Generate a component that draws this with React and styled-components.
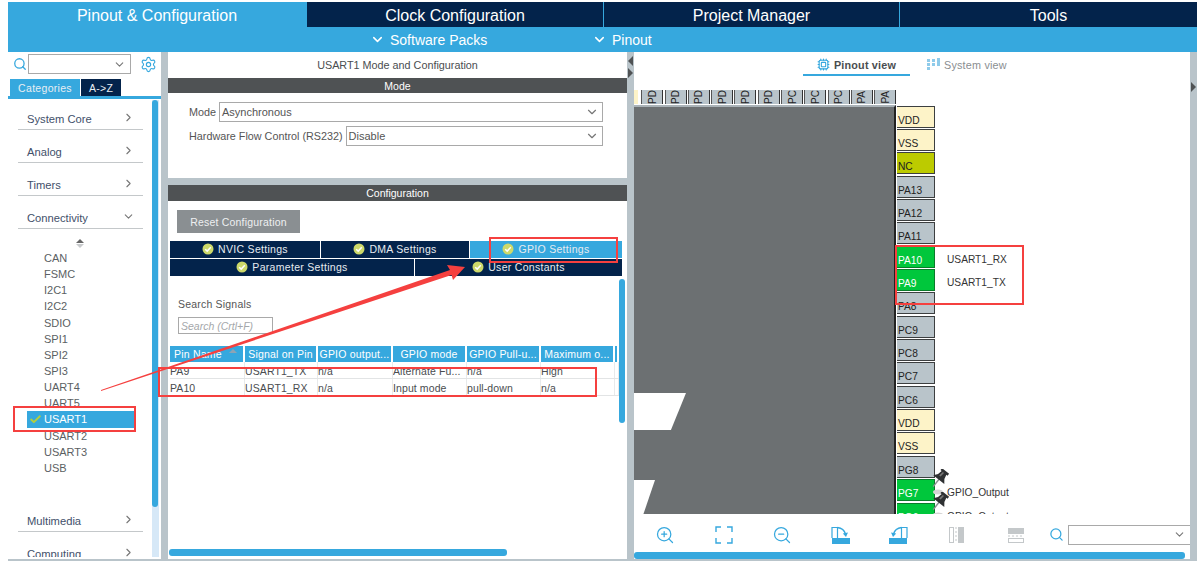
import React from "react";
import styled, { createGlobalStyle } from "styled-components";
import { ChevronDown, ChevronRight, Check, Search, Settings, ZoomIn, ZoomOut, Cpu } from "lucide-react";

const BLUE = "#36a8de";
const NAVY = "#03234b";
const STRIP = "#b9c4ca";
const DARK = "#4f5254";

const GlobalStyle = createGlobalStyle`
  html, body { margin: 0; padding: 0; background: #fff; }
  body { font-family: "Liberation Sans", Arial, sans-serif; overflow: hidden; }
  * { box-sizing: border-box; }
`;

const categoriesTop = ["System Core", "Analog", "Timers"];
const peripherals = ["CAN", "FSMC", "I2C1", "I2C2", "SDIO", "SPI1", "SPI2", "SPI3", "UART4", "UART5", "USART1", "USART2", "USART3", "USB"];
const topPins = ["PD", "PD", "PD", "PD", "PD", "PD", "PC", "PC", "PC", "PA", "PA"];
const sidePins = [
  { name: "VDD", kind: "power" },
  { name: "VSS", kind: "power" },
  { name: "NC", kind: "nc" },
  { name: "PA13" },
  { name: "PA12" },
  { name: "PA11" },
  { name: "PA10", kind: "on", label: "USART1_RX" },
  { name: "PA9", kind: "on", label: "USART1_TX" },
  { name: "PA8" },
  { name: "PC9" },
  { name: "PC8" },
  { name: "PC7" },
  { name: "PC6" },
  { name: "VDD", kind: "power" },
  { name: "VSS", kind: "power" },
  { name: "PG8" },
  { name: "PG7", kind: "on", label: "GPIO_Output", pinned: true },
  { name: "PG6", kind: "on", label: "GPIO_Output", pinned: true },
];
const columns = ["Pin Name", "Signal on Pin", "GPIO output...", "GPIO mode", "GPIO Pull-u...", "Maximum o..."];
const rows = [
  ["PA9", "USART1_TX", "n/a", "Alternate Fu...", "n/a", "High"],
  ["PA10", "USART1_RX", "n/a", "Input mode", "pull-down", "n/a"],
];

function Badge() {
  return (
    <svg width="12" height="12" viewBox="0 0 12 12">
      <circle cx="6" cy="6" r="5.5" fill="#cdd96a" />
      <path d="M3.2 6.2 5.2 8.1 8.8 4.2" fill="none" stroke="#fff" strokeWidth="1.5" />
    </svg>
  );
}

function Pushpin() {
  return (
    <svg width="22" height="27" viewBox="0 0 22 27">
      <ellipse cx="9" cy="23" rx="5" ry="2.500" fill="#d4d4d4" />
      <g transform="rotate(38 11 9)">
        <path d="M11 10v10" stroke="#8a8e91" strokeWidth="1.4" />
        <path d="M6.500 0h9v2.500h-1.500l1 4.500 3 4H4l3-4 1-4.500H6.500z" fill="#2f3133" />
        <path d="M9.500 2.500h1.500l-.4 5H8.700z" fill="#777" />
      </g>
    </svg>
  );
}

function FitIcon() {
  return (
    <svg width="18" height="18" viewBox="0 0 18 18" fill="none" stroke={BLUE} strokeWidth="1.4">
      <path d="M1 6V1h5M12 1h5v5M17 12v5h-5M6 17H1v-5" />
    </svg>
  );
}

function RotateIcon({ $flip }) {
  return (
    <svg width="19" height="18" viewBox="0 0 19 18" style={$flip ? { transform: "scaleX(-1)" } : undefined}>
      <path d="M1 12V1.500h5.500V12" fill="none" stroke={BLUE} strokeWidth="1.200" />
      <path d="M1 12h18v6H1z" fill={BLUE} />
      <path d="M6.500 1.500c4 .5 7 3 8 6.500" fill="none" stroke={BLUE} strokeWidth="1.400" />
      <path d="M11.800 7.500l3.200 3.500 2-4.500z" fill={BLUE} />
    </svg>
  );
}

function SplitIcon({ $horizontal }) {
  return (
    <svg width="16" height="18" viewBox="0 0 16 18" style={$horizontal ? { transform: "rotate(-90deg)" } : undefined}>
      <rect x="0.500" y="1.500" width="4" height="15" fill="none" stroke="#c4c8ca" />
      <path d="M7 1v16" stroke="#c4c8ca" strokeDasharray="2 2" />
      <rect x="9" y="1" width="6" height="16" fill="#c4c8ca" />
    </svg>
  );
}

function BlocksIcon() {
  return (
    <svg width="13" height="13" viewBox="0 0 13 13" fill="#8fcbea">
      <path d="M0 1h3v3H0zM5 1h3v3H5zM10 0h3v8h-3zM0 5h3v3H0zM5 5h3v3H5zM0 9h3v3H0z" />
    </svg>
  );
}

export default function App() {
  return (
    <Page>
      <GlobalStyle />
      <Frame>
        <TopTabs>
          <TopTab $active>Pinout &amp; Configuration</TopTab>
          <TopTab>Clock Configuration</TopTab>
          <TopTab>Project Manager</TopTab>
          <TopTab>Tools</TopTab>
        </TopTabs>
        <SubBar>
          <SubItem $width="222px"><ChevronDown size={15} strokeWidth={2.4} />Software Packs</SubItem>
          <SubItem><ChevronDown size={15} strokeWidth={2.4} />Pinout</SubItem>
        </SubBar>

        <Body>
          <Sidebar>
            <SearchRow>
              <Search size={14} color={BLUE} strokeWidth={2.2} />
              <SideSelect><ChevronDown size={13} color="#777" /></SideSelect>
              <Settings size={17} color={BLUE} strokeWidth={1.6} />
            </SearchRow>
            <SideTabs>
              <SideTab $active>Categories</SideTab>
              <SideTab>A-&gt;Z</SideTab>
            </SideTabs>
            <SideMain>
              <SideList>
                {categoriesTop.map((c) => (
                  <Category key={c}>{c}<ChevronRight size={13} color="#777" /></Category>
                ))}
                <Category>Connectivity<ChevronDown size={13} color="#777" /></Category>
                <ScrollUp><TriUp /><TriDown /></ScrollUp>
                <Items>
                  {peripherals.map((p) => (
                    <Item key={p} $selected={p === "USART1"}>
                      {p === "USART1" && <CheckMark><Check size={13} strokeWidth={3.4} color="#b5cf3a" /></CheckMark>}
                      {p}
                    </Item>
                  ))}
                </Items>
                <Category>Multimedia<ChevronRight size={13} color="#777" /></Category>
                <Category>Computing<ChevronRight size={13} color="#777" /></Category>
              </SideList>
              <SideTrack><SideThumb /></SideTrack>
            </SideMain>
          </Sidebar>

          <Strip />

          <Middle>
            <PanelTitle>USART1 Mode and Configuration</PanelTitle>
            <DarkBar $height="15px">Mode</DarkBar>
            <ModeBody>
              <ModeRow>
                <ModeLabel>Mode</ModeLabel>
                <ModeSelect>Asynchronous<ChevronDown size={14} color="#777" /></ModeSelect>
              </ModeRow>
              <ModeRow>
                <ModeLabel>Hardware Flow Control (RS232)</ModeLabel>
                <ModeSelect>Disable<ChevronDown size={14} color="#777" /></ModeSelect>
              </ModeRow>
            </ModeBody>
            <HSep />
            <DarkBar $height="16px">Configuration</DarkBar>
            <ConfigBody>
              <ResetButton>Reset Configuration</ResetButton>
              <TabGrid>
                <TabRow $columns="151px 149px 152px">
                  <ConfigTab><Badge />NVIC Settings</ConfigTab>
                  <ConfigTab><Badge />DMA Settings</ConfigTab>
                  <ConfigTab $active><Badge />GPIO Settings</ConfigTab>
                </TabRow>
                <TabRow $columns="245px 207px">
                  <ConfigTab><Badge />Parameter Settings</ConfigTab>
                  <ConfigTab><Badge />User Constants</ConfigTab>
                </TabRow>
              </TabGrid>
              <TableArea>
                <TableContent>
                  <SearchLabel>Search Signals</SearchLabel>
                  <SearchBox>Search (Crtl+F)</SearchBox>
                  <TableHead>
                    {columns.map((c, i) => (
                      <HeadCell key={c} $first={i === 0}>
                        {c}
                        {i === 0 && <SortMark />}
                      </HeadCell>
                    ))}
                    <HeadCell />
                  </TableHead>
                  {rows.map((r) => (
                    <TableRow key={r[0]}>
                      {r.map((v, i) => <Cell key={i}>{v}</Cell>)}
                      <Cell />
                    </TableRow>
                  ))}
                </TableContent>
                <TableScroll />
              </TableArea>
              <BottomScroll />
            </ConfigBody>
          </Middle>

          <Strip>
            <ArrowLeft />
            <ArrowRight />
          </Strip>

          <Right>
            <ViewTabs>
              <ViewTab $active><Cpu size={13} color={BLUE} />Pinout view</ViewTab>
              <ViewTab><BlocksIcon />System view</ViewTab>
            </ViewTabs>
            <Canvas>
              <TopPinRow>
                <TopStub />
                {topPins.map((p, i) => (
                  <TopPin key={i}><span>{p}</span></TopPin>
                ))}
              </TopPinRow>
              <ChipRow>
                <ChipBody>
                  <NotchTop />
                  <NotchBottom />
                </ChipBody>
                <PinColumn>
                  {sidePins.map((p, i) => (
                    <PinRow key={i}>
                      <Pin $kind={p.kind}>{p.name}</Pin>
                      {p.label && <PinLabel>{p.label}</PinLabel>}
                      {p.pinned && <PinMark><Pushpin /></PinMark>}
                    </PinRow>
                  ))}
                </PinColumn>
              </ChipRow>
            </Canvas>
            <Toolbar>
              <ToolSlot><ZoomIn size={20} color={BLUE} strokeWidth={1.5} /></ToolSlot>
              <ToolSlot><FitIcon /></ToolSlot>
              <ToolSlot><ZoomOut size={20} color={BLUE} strokeWidth={1.5} /></ToolSlot>
              <ToolSlot><RotateIcon /></ToolSlot>
              <ToolSlot><RotateIcon $flip /></ToolSlot>
              <ToolSlot><SplitIcon /></ToolSlot>
              <ToolSlot><SplitIcon $horizontal /></ToolSlot>
              <ToolSearch>
                <Search size={15} color={BLUE} strokeWidth={2} />
                <ToolSelect><ChevronDown size={13} color="#777" /></ToolSelect>
              </ToolSearch>
            </Toolbar>
            <RightScroll />
          </Right>

          <Strip>
            <ArrowEdge />
          </Strip>
        </Body>
        <BottomLine />
      </Frame>

      <RedBox $x={13} $y={406} $w={123} $h={26} />
      <RedBox $x={489} $y={237} $w={129} $h={26} />
      <RedBox $x={158} $y={367} $w={439} $h={30} />
      <RedBox $x={895} $y={245} $w={129} $h={60} />
      <ArrowLayer width="1200" height="569" viewBox="0 0 1200 569">
        <polygon points="101,390 450,270 447,265 465,267 453,280 451.500,275 101,391" fill="#f5403f" />
      </ArrowLayer>
    </Page>
  );
}

const Page = styled.div`
  position: relative;
  width: 1200px;
  height: 569px;
  padding: 2px 3px 0 8px;
  overflow: hidden;
  background: #fff;
`;

const Frame = styled.div`
  display: flex;
  flex-direction: column;
  height: 559px;
`;

const TopTabs = styled.div`
  display: grid;
  grid-template-columns: 298px 297px 296px 1fr;
  height: 25px;
  background: ${BLUE};
`;

const TopTab = styled.div`
  display: flex;
  align-items: center;
  justify-content: center;
  margin-left: ${(p) => (p.$active ? "0" : "1px")};
  padding-top: 2px;
  background: ${(p) => (p.$active ? BLUE : NAVY)};
  color: #fff;
  font-size: 16px;
`;

const SubBar = styled.div`
  display: flex;
  align-items: center;
  height: 25px;
  padding-left: 362px;
  background: ${BLUE};
`;

const SubItem = styled.div`
  display: flex;
  align-items: center;
  gap: 5px;
  width: ${(p) => p.$width || "auto"};
  color: #fff;
  font-size: 14px;
`;

const Body = styled.div`
  display: flex;
  flex: 1;
  min-height: 0;
`;

const BottomLine = styled.div`
  height: 2px;
  background: ${STRIP};
`;

const Strip = styled.div`
  position: relative;
  flex: 0 0 7px;
  background: ${STRIP};
`;

const ArrowLeft = styled.div`
  position: absolute;
  top: 4px;
  left: 1px;
  border: 5px solid transparent;
  border-left: 0;
  border-right: 5px solid #4f5254;
`;

const ArrowRight = styled.div`
  position: absolute;
  top: 16px;
  left: 1px;
  border: 5px solid transparent;
  border-right: 0;
  border-left: 5px solid #4f5254;
`;

const ArrowEdge = styled(ArrowRight)`
  top: 30px;
`;

const Sidebar = styled.div`
  display: flex;
  flex-direction: column;
  flex: 0 0 153px;
  min-height: 0;
  padding-bottom: 2px;
  overflow: hidden;
`;

const SearchRow = styled.div`
  display: flex;
  align-items: center;
  height: 24px;
  padding-left: 5px;
  gap: 1px;
  svg:last-child { margin-left: 8px; }
`;

const SideSelect = styled.div`
  display: flex;
  align-items: center;
  justify-content: flex-end;
  width: 103px;
  height: 20px;
  padding-right: 4px;
  border: 1px solid #a9a9a9;
`;

const SideTabs = styled.div`
  display: flex;
  gap: 1px;
  height: 23px;
  padding: 3px 0 0 2px;
  border-bottom: 3px solid ${BLUE};
`;

const SideTab = styled.div`
  display: flex;
  align-items: center;
  justify-content: center;
  width: ${(p) => (p.$active ? "70px" : "40px")};
  background: ${(p) => (p.$active ? BLUE : NAVY)};
  color: #e8eef3;
  font-size: 10.5px;
  letter-spacing: 0.3px;
`;

const SideMain = styled.div`
  display: flex;
  flex: 1;
  min-height: 0;
`;

const SideList = styled.div`
  width: 144px;
  min-height: 0;
  overflow: hidden;
`;

const Category = styled.div`
  display: flex;
  align-items: flex-end;
  justify-content: space-between;
  height: 33px;
  margin-left: 10px;
  width: 125px;
  padding: 0 8px 3px 9px;
  border-bottom: 1px solid #c4c8ca;
  color: #42506a;
  font-size: 11.2px;
  line-height: 13px;
  flex-shrink: 0;
  &:first-child { height: 31px; }
  svg { margin-bottom: 2px; }
`;

const ScrollUp = styled.div`
  display: flex;
  flex-direction: column;
  align-items: center;
  gap: 1px;
  width: 144px;
  height: 21px;
  padding-top: 10px;
`;

const TriUp = styled.span`
  border: 4px solid transparent;
  border-top: 0;
  border-bottom: 4px solid #666;
`;

const TriDown = styled.span`
  border: 4px solid transparent;
  border-bottom: 0;
  border-top: 4px solid #c8cacc;
`;

const Items = styled.div`
  margin-bottom: 23px;
`;

const Item = styled.div`
  position: relative;
  display: flex;
  align-items: center;
  height: 16.15px;
  margin-left: 19px;
  width: 107px;
  padding-left: 17px;
  background: ${(p) => (p.$selected ? BLUE : "transparent")};
  color: ${(p) => (p.$selected ? "#fff" : "#5b5f63")};
  font-size: 11px;
`;

const CheckMark = styled.span`
  position: absolute;
  left: 2px;
  top: 2px;
  display: flex;
`;

const SideTrack = styled.div`
  flex: 0 0 7px;
  margin: 1px 0 0 0;
  background: #d6e8f7;
`;

const SideThumb = styled.div`
  width: 6px;
  height: 407px;
  background: ${BLUE};
  border-radius: 3px;
`;

const Middle = styled.div`
  display: flex;
  flex-direction: column;
  flex: 0 0 459px;
  min-height: 0;
`;

const PanelTitle = styled.div`
  display: flex;
  align-items: center;
  justify-content: center;
  height: 26px;
  color: #4a4d50;
  font-size: 10.8px;
`;

const DarkBar = styled.div`
  display: flex;
  align-items: center;
  justify-content: center;
  height: ${(p) => p.$height};
  background: ${DARK};
  color: #fff;
  font-size: 10.5px;
`;

const ModeBody = styled.div`
  display: flex;
  flex-direction: column;
  gap: 4px;
  height: 85px;
  padding: 9px 24px 0 21px;
`;

const ModeRow = styled.div`
  display: flex;
  align-items: center;
  gap: 3px;
  height: 20px;
`;

const ModeLabel = styled.div`
  color: #555;
  font-size: 10.8px;
  white-space: nowrap;
`;

const ModeSelect = styled.div`
  display: flex;
  align-items: center;
  justify-content: space-between;
  flex: 1;
  height: 20px;
  padding: 0 3px 0 2px;
  border: 1px solid #a9a9a9;
  color: #555;
  font-size: 11px;
`;

const HSep = styled.div`
  height: 7px;
  background: ${STRIP};
`;

const ConfigBody = styled.div`
  display: flex;
  flex-direction: column;
  flex: 1;
  min-height: 0;
  padding: 9px 0 3px 1px;
`;

const ResetButton = styled.div`
  display: flex;
  align-items: center;
  justify-content: center;
  width: 123px;
  height: 23px;
  margin-left: 8px;
  background: #8a8f92;
  color: #eef0f1;
  font-size: 10.5px;
  letter-spacing: 0.2px;
`;

const TabGrid = styled.div`
  display: flex;
  flex-direction: column;
  gap: 1px;
  width: 452px;
  margin: 8px 0 0 1px;
`;

const TabRow = styled.div`
  display: grid;
  grid-template-columns: ${(p) => p.$columns};
  height: 17px;
`;

const ConfigTab = styled.div`
  display: flex;
  align-items: center;
  justify-content: center;
  gap: 4px;
  margin-right: 1px;
  padding-bottom: 1px;
  background: ${(p) => (p.$active ? BLUE : NAVY)};
  color: #e6ebf0;
  font-size: 10.5px;
  letter-spacing: 0.3px;
  &:last-child { margin-right: 0; }
`;

const TableArea = styled.div`
  display: flex;
  flex: 1;
  min-height: 0;
  padding-top: 3px;
`;

const TableContent = styled.div`
  flex: 0 0 449px;
  padding: 17px 0 0 1px;
`;

const SearchLabel = styled.div`
  margin-left: 8px;
  height: 18px;
  color: #555;
  font-size: 10.5px;
  letter-spacing: 0.2px;
  line-height: 16px;
`;

const SearchBox = styled.div`
  display: flex;
  align-items: center;
  width: 95px;
  height: 17px;
  margin: 3px 0 12px 8px;
  padding-left: 2px;
  border: 1px solid #a9a9a9;
  color: #a4a7aa;
  font-size: 10.5px;
  font-style: italic;
`;

const tableColumns = "75px 73px 75px 74px 74px 74px 4px";

const TableHead = styled.div`
  display: grid;
  grid-template-columns: ${tableColumns};
  height: 16px;
`;

const HeadCell = styled.div`
  position: relative;
  display: flex;
  align-items: center;
  justify-content: ${(p) => (p.$first ? "flex-start" : "center")};
  margin-right: 2px;
  padding-left: ${(p) => (p.$first ? "4px" : "0")};
  background: ${BLUE};
  color: #fff;
  font-size: 10.5px;
  letter-spacing: 0.2px;
  white-space: nowrap;
  overflow: hidden;
`;

const SortMark = styled.span`
  position: absolute;
  right: 6px;
  top: 3px;
  border: 4px solid transparent;
  border-top: 0;
  border-bottom: 4px solid #8fa3b3;
`;

const TableRow = styled.div`
  display: grid;
  grid-template-columns: ${tableColumns};
  height: 17px;
  border-bottom: 1px solid #e2e4e5;
`;

const Cell = styled.div`
  display: flex;
  align-items: center;
  padding-top: 1px;
  border-right: 1px solid #e8eaeb;
  color: #4a4d50;
  font-size: 10.5px;
  letter-spacing: 0.1px;
  white-space: nowrap;
  overflow: hidden;
`;

const TableScroll = styled.div`
  flex: 0 0 6px;
  height: 144px;
  background: ${BLUE};
  border-radius: 3px;
`;

const BottomScroll = styled.div`
  width: 338px;
  height: 7px;
  background: ${BLUE};
  border-radius: 3px;
`;

const Right = styled.div`
  display: flex;
  flex-direction: column;
  flex: 1;
  min-width: 0;
  min-height: 0;
`;

const ViewTabs = styled.div`
  display: flex;
  height: 36px;
  padding: 3px 0 0 169px;
  gap: 17px;
`;

const ViewTab = styled.div`
  display: flex;
  align-items: center;
  justify-content: ${(p) => (p.$active ? "center" : "flex-start")};
  gap: 4px;
  width: 107px;
  height: 21px;
  border-bottom: 2px solid ${(p) => (p.$active ? BLUE : "transparent")};
  color: ${(p) => (p.$active ? "#4a4d50" : "#8a8e91")};
  font-size: 10.8px;
  font-weight: ${(p) => (p.$active ? 700 : 400)};
  letter-spacing: 0.2px;
`;

const Canvas = styled.div`
  display: flex;
  flex-direction: column;
  flex: 1;
  min-height: 0;
  overflow: hidden;
`;

const TopPinRow = styled.div`
  display: flex;
  height: 16px;
  padding-top: 2px;
  gap: 1.3px;
  flex-shrink: 0;
`;

const TopStub = styled.div`
  width: 4px;
  height: 14px;
  margin-right: 2px;
  background: #fdf3c8;
`;

const TopPin = styled.div`
  display: flex;
  justify-content: center;
  align-items: flex-end;
  width: 22px;
  height: 14px;
  background: ${STRIP};
  border-left: 1px solid #555;
  border-right: 1px solid #333;
  overflow: hidden;
  span {
    writing-mode: vertical-rl;
    transform: rotate(180deg);
    color: #222;
    font-size: 10px;
    line-height: 11px;
    white-space: nowrap;
  }
`;

const ChipRow = styled.div`
  display: flex;
  flex: 1;
  min-height: 0;
`;

const ChipBody = styled.div`
  position: relative;
  flex: 0 0 262px;
  margin-top: 1px;
  background: #6c7072;
  border-top: 2px solid #aab3b8;
  border-right: 2px solid #222;
`;

const NotchTop = styled.div`
  position: absolute;
  left: 0;
  top: 286px;
  width: 52px;
  height: 37px;
  background: #fff;
  clip-path: polygon(0 0, 100% 0, 71% 100%, 0 100%);
`;

const NotchBottom = styled.div`
  position: absolute;
  left: 0;
  top: 373px;
  width: 21px;
  height: 34px;
  background: #fff;
  clip-path: polygon(0 0, 100% 0, 45% 100%, 0 100%);
`;

const PinColumn = styled.div`
  display: flex;
  flex-direction: column;
  padding: 1px 0 0 1px;
`;

const PinRow = styled.div`
  position: relative;
  display: flex;
  align-items: center;
  flex: 0 0 23.35px;
`;

const pinColors = { power: "#fdf3c8", nc: "#bccb00", on: "#00c73c" };

const Pin = styled.div`
  display: flex;
  align-items: flex-end;
  width: 38px;
  height: 22px;
  padding: 0 0 0 1px;
  background: ${(p) => pinColors[p.$kind] || STRIP};
  border: 1px solid ${(p) => (p.$kind === "on" ? "#0a7a2a" : "#3c3f40")};
  border-left: 0;
  color: ${(p) => (p.$kind === "on" ? "#fff" : "#222")};
  font-size: 10.2px;
  line-height: 12px;
`;

const PinLabel = styled.div`
  margin-left: 12px;
  padding-top: 5px;
  color: #333;
  font-size: 10.2px;
  white-space: nowrap;
`;

const PinMark = styled.span`
  position: absolute;
  left: 32px;
  top: -10px;
  z-index: 1;
  display: flex;
`;

const Toolbar = styled.div`
  display: flex;
  align-items: center;
  height: 35px;
  padding: 6px 0 0 2px;
  flex-shrink: 0;
`;

const ToolSlot = styled.div`
  display: flex;
  align-items: center;
  justify-content: center;
  width: 58.4px;
`;

const ToolSearch = styled.div`
  display: flex;
  align-items: center;
  flex: 1;
  justify-content: flex-end;
  gap: 4px;
`;

const ToolSelect = styled.div`
  display: flex;
  align-items: center;
  justify-content: flex-end;
  width: 122px;
  height: 20px;
  padding-right: 4px;
  border: 1px solid #a9a9a9;
  border-right: 0;
`;

const RightScroll = styled.div`
  width: 551px;
  height: 7px;
  margin-top: 3px;
  background: ${BLUE};
  border-radius: 3px;
  flex-shrink: 0;
`;

const RedBox = styled.div`
  position: absolute;
  left: ${(p) => p.$x}px;
  top: ${(p) => p.$y}px;
  width: ${(p) => p.$w}px;
  height: ${(p) => p.$h}px;
  border: 2.5px solid #f5403f;
  pointer-events: none;
`;

const ArrowLayer = styled.svg`
  position: absolute;
  left: 0;
  top: 0;
  pointer-events: none;
`;
